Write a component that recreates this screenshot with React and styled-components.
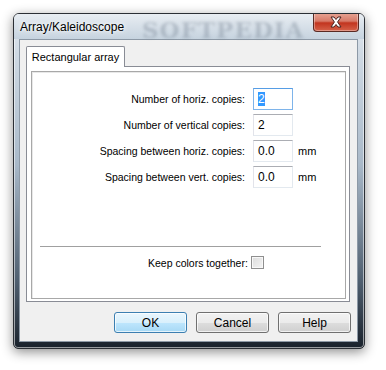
import React from "react";
import styled, { createGlobalStyle } from "styled-components";

const GlobalStyle = createGlobalStyle`
  html, body {
    margin: 0;
    padding: 0;
    background: #ffffff;
  }
  body {
    font-family: "Liberation Sans", Arial, sans-serif;
    font-size: 10.5px;
    color: #000;
  }
`;

const Page = styled.div`
  width: 386px;
  height: 370px;
  padding: 13px 0 0 13px;
  box-sizing: border-box;
`;

const Window = styled.div`
  position: relative;
  width: 352px;
  height: 336px;
  box-sizing: border-box;
  border: 1px solid #2b2f35;
  border-radius: 6px 6px 5px 5px;
  padding: 0 6px 6px 5px;
  display: flex;
  flex-direction: column;
  box-shadow: 0 3px 12px rgba(0, 0, 0, 0.45), inset 0 0 0 1px rgba(255, 255, 255, 0.55);
  background: linear-gradient(180deg, #e4e9ef 0%, #cfd9e3 12%, #a9b9c9 45%, #4f5f70 80%, #1a222c 100%);
  overflow: hidden;
`;

const TitleBar = styled.div`
  height: 27px;
  display: flex;
  align-items: flex-start;
  justify-content: space-between;
  background: linear-gradient(180deg, #e8edf2 0%, #c6d3df 100%);
  margin: 0 -6px 0 -5px;
  padding: 0 5px 0 6px;
`;

const Title = styled.div`
  position: relative;
  z-index: 1;
  font-family: "Liberation Sans", Arial, sans-serif;
  font-size: 12px;
  color: #000;
  margin-top: 6px;
  text-shadow: 0 0 6px #fff, 0 0 3px #fff;
`;

const Watermark = styled.div`
  position: absolute;
  left: 128px;
  top: 2px;
  font-family: "DejaVu Serif", serif;
  font-weight: bold;
  font-size: 23px;
  letter-spacing: 1px;
  color: rgba(95, 110, 125, 0.3);
  filter: blur(1.4px);
  pointer-events: none;
`;

const CloseButton = styled.div`
  width: 44px;
  height: 18px;
  margin-top: -1px;
  border: 1px solid #5a2a24;
  border-top: none;
  border-radius: 0 0 4px 4px;
  background: linear-gradient(180deg, #e8a595 0%, #d77a68 45%, #c2351f 55%, #d5624a 100%);
  box-shadow: inset 0 0 0 1px rgba(255, 255, 255, 0.35);
  display: flex;
  align-items: center;
  justify-content: center;
`;

const Client = styled.div`
  flex: 1;
  background: #f0f0f0;
  border: 1px solid #8d99a6;
  padding: 6px 7px 8px 6px;
  display: flex;
  flex-direction: column;
`;

const TabStrip = styled.div`
  display: flex;
  height: 20px;
  position: relative;
  z-index: 1;
`;

const Tab = styled.div`
  width: 99px;
  box-sizing: border-box;
  height: 21px;
  background: #ffffff;
  border: 1px solid #898c95;
  border-bottom: none;
  border-radius: 2px 2px 0 0;
  display: flex;
  align-items: center;
  justify-content: center;
  padding-bottom: 1px;
  font-size: 11px;
`;

const TabPanel = styled.div`
  height: 236px;
  width: 324px;
  box-sizing: border-box;
  background: #ffffff;
  border: 1px solid #898c95;
  padding: 4px 3px 2px 4px;
  display: flex;
`;

const PageBox = styled.div`
  flex: 1;
  border: 1px solid #a8a8a8;
  box-shadow: inset 1px 1px 0 #e8e8e8;
  padding: 16px 0 0 0;
  display: flex;
  flex-direction: column;
`;

const FieldGrid = styled.div`
  display: grid;
  grid-template-columns: 213px 40px auto;
  column-gap: 8px;
  row-gap: 4px;
  align-items: center;
`;

const Label = styled.div`
  text-align: right;
  white-space: nowrap;
`;

const Input = styled.div`
  height: 22px;
  box-sizing: border-box;
  border: 1px solid;
  border-color: ${p => (p.$focused ? "#569de5 #7eb4ea #7eb4ea #7eb4ea" : "#abadb3 #e3e9ef #e3e9ef #e2e3ea")};
  background: #fff;
  padding: 0 0 0 4px;
  display: flex;
  align-items: center;
  font-size: 12px;
`;

const Selected = styled.span`
  background: #3399ff;
  color: #fff;
`;

const Unit = styled.div`
  margin-left: -3px;
  font-size: 11px;
`;

const Separator = styled.div`
  height: 1px;
  background: #a0a0a0;
  margin: 58px 24px 0 8px;
`;

const KeepRow = styled.div`
  display: flex;
  align-items: center;
  justify-content: flex-start;
  padding-left: 116px;
  margin-top: 9px;
  gap: 3px;
`;

const Checkbox = styled.div`
  width: 13px;
  height: 13px;
  box-sizing: border-box;
  border: 1px solid #8f8f8f;
  background: linear-gradient(135deg, #dcdcdc 0%, #f4f4f4 100%);
  box-shadow: inset 0 0 0 1px #f8f8f8;
`;

const ButtonRow = styled.div`
  display: flex;
  justify-content: flex-end;
  gap: 9px;
  margin-top: 10px;
  margin-right: -1px;
`;

const Button = styled.div`
  width: 73px;
  height: 21px;
  box-sizing: border-box;
  border: 1px solid ${p => (p.$default ? "#3c7fb1" : "#707070")};
  border-radius: 3px;
  display: flex;
  align-items: center;
  justify-content: center;
  font-size: 12px;
  background: ${p =>
    p.$default
      ? "linear-gradient(180deg, #eaf6fd 0%, #d9f0fc 50%, #bee6fd 51%, #a7d9f5 100%)"
      : "linear-gradient(180deg, #f2f2f2 0%, #ebebeb 50%, #dddddd 51%, #cfcfcf 100%)"};
  box-shadow: inset 0 0 0 1px rgba(255, 255, 255, 0.7);
`;

const rows = [
  { label: "Number of horiz. copies:", value: "2", focused: true },
  { label: "Number of vertical copies:", value: "2" },
  { label: "Spacing between horiz. copies:", value: "0.0", unit: "mm" },
  { label: "Spacing between vert. copies:", value: "0.0", unit: "mm" },
];

export default function App() {
  return (
    <>
      <GlobalStyle />
      <Page>
        <Window>
          <Watermark>SOFTPEDIA</Watermark>
          <TitleBar>
            <Title>Array/Kaleidoscope</Title>
            <CloseButton>
              <svg width="14" height="12" viewBox="0 0 14 12">
                <path
                  d="M2 1 L5 1 L7 3.5 L9 1 L12 1 L8.6 6 L12 11 L9 11 L7 8.5 L5 11 L2 11 L5.4 6 Z"
                  fill="#ffffff"
                  stroke="#4a2320"
                  strokeWidth="1"
                  strokeLinejoin="round"
                />
              </svg>
            </CloseButton>
          </TitleBar>
          <Client>
            <TabStrip>
              <Tab>Rectangular array</Tab>
            </TabStrip>
            <TabPanel>
              <PageBox>
                <FieldGrid>
                  {rows.map(r => (
                    <React.Fragment key={r.label}>
                      <Label>{r.label}</Label>
                      <Input $focused={r.focused}>
                        {r.focused ? <Selected>{r.value}</Selected> : r.value}
                      </Input>
                      <Unit>{r.unit || ""}</Unit>
                    </React.Fragment>
                  ))}
                </FieldGrid>
                <Separator />
                <KeepRow>
                  <span>Keep colors together:</span>
                  <Checkbox />
                </KeepRow>
              </PageBox>
            </TabPanel>
            <ButtonRow>
              <Button $default>OK</Button>
              <Button>Cancel</Button>
              <Button>Help</Button>
            </ButtonRow>
          </Client>
        </Window>
      </Page>
    </>
  );
}
